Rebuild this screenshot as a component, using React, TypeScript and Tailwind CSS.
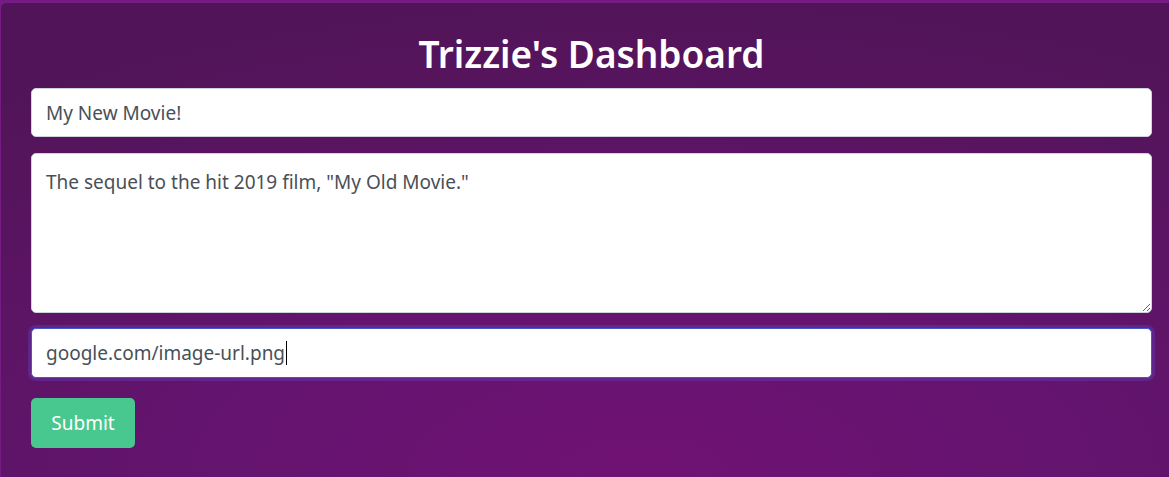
import React from "react";

export default function App() {
  return (
    <div className="h-[477px] w-full overflow-hidden bg-[#761a84] pl-px pt-[3px]">
      <div
        className="h-full rounded-tl-[5px] bg-[radial-gradient(ellipse_90%_100%_at_55%_100%,#701274_0%,#651470_40%,#521458_100%)] pl-[30px] pr-[17px] pt-[27px]"
        style={{ fontFamily: '"Noto Sans", "Open Sans", sans-serif' }}
      >
        <h1 className="text-center text-[37px] font-semibold leading-[48px] text-white mb-[10px]">
          Trizzie's Dashboard
        </h1>
        <div className="flex flex-col">
          <input
            defaultValue="My New Movie!"
            className="h-[49px] w-full rounded-[5px] border border-[#ced4da] bg-white px-[14px] text-[19px] text-[#495057] outline-none"
          />
          <textarea
            defaultValue={'The sequel to the hit 2019 film, "My Old Movie."'}
            className="mt-4 h-[160px] w-full rounded-[5px] border border-[#ced4da] bg-white px-[14px] py-[15px] text-[19px] leading-[26px] text-[#495057] outline-none"
          />
          <div className="mt-[15px] flex h-[50px] w-full items-center rounded-[5px] border border-[#4757c9] bg-white px-[14px] text-[19px] text-[#495057] shadow-[0_0_0_3px_rgba(96,70,200,0.35)]">
            <span>google.com/image-url.png</span>
            <span className="ml-px inline-block h-[24px] w-px bg-black" />
          </div>
          <div className="mt-5">
            <button className="h-[50px] w-[104px] rounded-[5px] bg-[#48c78e] text-[19px] text-white">
              Submit
            </button>
          </div>
        </div>
      </div>
    </div>
  );
}
